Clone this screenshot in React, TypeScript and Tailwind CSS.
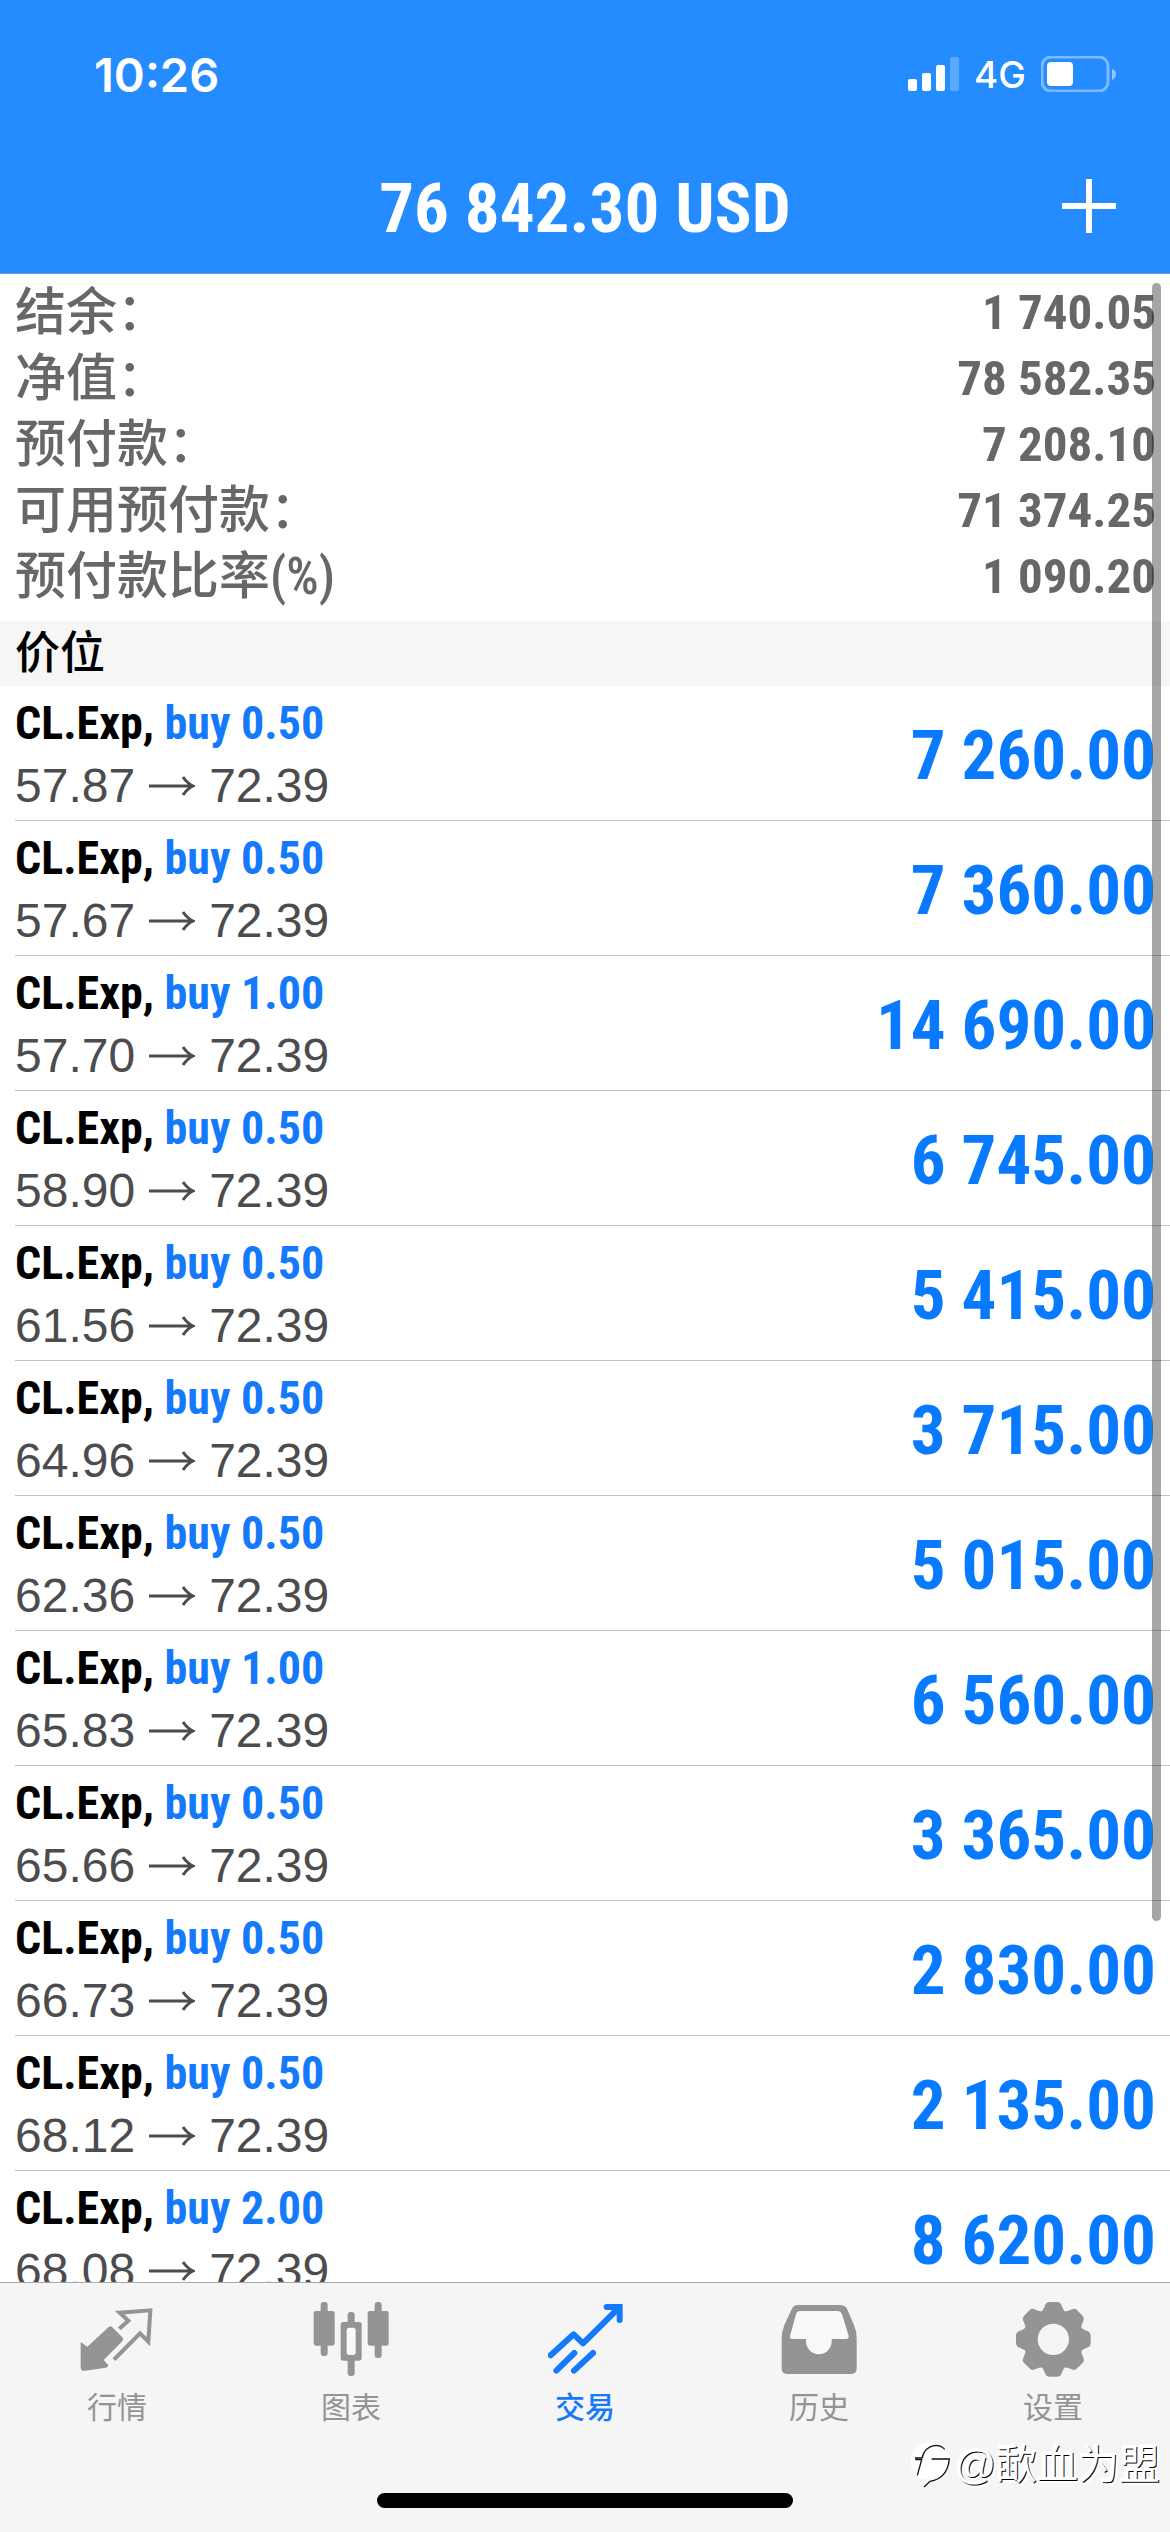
import type { ReactNode } from "react";
import clsx from "clsx";

const summary = [
  { label: "结余：", value: "1 740.05" },
  { label: "净值：", value: "78 582.35" },
  { label: "预付款：", value: "7 208.10" },
  { label: "可用预付款：", value: "71 374.25" },
  { label: "预付款比率(%)", value: "1 090.20" },
];

const positions = [
  { volume: "0.50", open: "57.87", profit: "7 260.00" },
  { volume: "0.50", open: "57.67", profit: "7 360.00" },
  { volume: "1.00", open: "57.70", profit: "14 690.00" },
  { volume: "0.50", open: "58.90", profit: "6 745.00" },
  { volume: "0.50", open: "61.56", profit: "5 415.00" },
  { volume: "0.50", open: "64.96", profit: "3 715.00" },
  { volume: "0.50", open: "62.36", profit: "5 015.00" },
  { volume: "1.00", open: "65.83", profit: "6 560.00" },
  { volume: "0.50", open: "65.66", profit: "3 365.00" },
  { volume: "0.50", open: "66.73", profit: "2 830.00" },
  { volume: "0.50", open: "68.12", profit: "2 135.00" },
  { volume: "2.00", open: "68.08", profit: "8 620.00" },
];

const currentPrice = "72.39";

const tabs: { label: string; icon: ReactNode; active?: boolean }[] = [
  { label: "行情", icon: <QuotesIcon /> },
  { label: "图表", icon: <ChartIcon /> },
  { label: "交易", icon: <TradeIcon />, active: true },
  { label: "历史", icon: <HistoryIcon /> },
  { label: "设置", icon: <SettingsIcon /> },
];

function QuotesIcon() {
  return (
    <svg viewBox="118 66 225 225" className="size-[75px]" aria-hidden="true">
      <path
        d="M236 146 263 122 237 98 329 91 323 185 298 160 220 239"
        fill="none"
        stroke="currentColor"
        strokeWidth="12"
      />
      <path
        d="M120 186 140 200 204 141Q209 136 214 141L245 172Q250 178 245 184L189 240 203 256Q203 262 196 263L132 272Q120 274 120 262Z"
        fill="currentColor"
      />
    </svg>
  );
}

function ChartIcon() {
  return (
    <svg viewBox="820 66 225 225" className="size-[75px] overflow-visible" fill="currentColor" aria-hidden="true">
      <rect x="840" y="66" width="21" height="162" rx="9" />
      <rect x="819" y="93" width="63" height="104" rx="7" />
      <rect x="921" y="96" width="21" height="192" rx="9" />
      <rect x="900" y="126" width="63" height="116" rx="7" />
      <rect x="918" y="143" width="27" height="82" rx="8" fill="#f9f9f9" />
      <rect x="1002" y="66" width="21" height="168" rx="9" />
      <rect x="981" y="93" width="63" height="104" rx="7" />
    </svg>
  );
}

function TradeIcon() {
  return (
    <svg
      viewBox="142 66 225 225"
      className="size-[75px]"
      fill="none"
      stroke="currentColor"
      strokeWidth="18"
      strokeLinecap="round"
      strokeLinejoin="round"
      aria-hidden="true"
    >
      <path d="M150 226 219 163 247 190 354 84" />
      <path d="M318 81H357V120" strokeLinejoin="miter" />
      <path d="M167 272 221 219M220 272 277 219" />
    </svg>
  );
}

function HistoryIcon() {
  return (
    <svg viewBox="844 66 225 225" className="size-[75px] overflow-visible" aria-hidden="true">
      <path
        fill="currentColor"
        d="M893 75H1018Q1033 75 1039 86L1060 135Q1068 155 1068 175V265Q1068 282 1052 282H859Q843 282 843 265V175Q843 155 851 135L873 88Q878 75 893 75Z"
      />
      <path
        fill="#f9f9f9"
        d="M898 93H1010Q1020 93 1024 103L1044 168Q1045 177 1036 177H993V184A38 38 0 0 1 916 184V177H875Q866 177 868 168L886 103Q889 93 898 93Z"
      />
    </svg>
  );
}

function SettingsIcon() {
  return (
    <svg viewBox="-112 -112 225 225" className="size-[75px]" fill="currentColor" aria-hidden="true">
      <circle r="69" fill="none" stroke="currentColor" strokeWidth="44" />
      {[0, 45, 90, 135, 180, 225, 270, 315].map((angle) => (
        <path
          key={angle}
          transform={`rotate(${angle})`}
          d="M-37-81Q-31-86-24-104-21-112-12-112H12Q21-112 24-104 31-86 37-81Z"
        />
      ))}
    </svg>
  );
}

function StatusBar() {
  return (
    <div className="flex h-[148px] items-center justify-between pl-[94px] pr-[54px]">
      <time className="font-[Inter,sans-serif] text-[47px] font-semibold leading-none">10:26</time>
      <div className="flex items-center gap-[15px]">
        <svg viewBox="0 0 51 34" className="h-[34px] w-[51px]" fill="currentColor" aria-hidden="true">
          <rect y="22" width="9" height="12" rx="2" />
          <rect x="14" y="16" width="9" height="18" rx="2" />
          <rect x="28" y="8" width="9" height="26" rx="2" />
          <rect x="42" width="9" height="34" rx="2" opacity=".25" />
        </svg>
        <span className="font-[Inter,sans-serif] text-[37px] font-medium leading-none">4G</span>
        <svg viewBox="0 0 75 36" className="h-[36px] w-[75px]" aria-hidden="true">
          <rect x="1" y="1" width="66" height="34" rx="9" fill="none" stroke="currentColor" strokeWidth="3" opacity=".4" />
          <rect x="6" y="6" width="26" height="24" rx="4" fill="currentColor" />
          <path d="M71 13Q75 14 75 18T71 24Z" fill="currentColor" opacity=".5" />
        </svg>
      </div>
    </div>
  );
}

function PositionRow({ volume, open, profit }: { volume: string; open: string; profit: string }) {
  return (
    <li className="ml-[15px] flex h-[135px] shrink-0 items-center justify-between border-b border-[#c2c2c4] pr-[14px]">
      <div className="pt-px">
        <p className="font-['Roboto_Condensed',sans-serif] text-[46px] font-bold leading-[64px] text-black">
          CL.Exp, <span className="text-[#1479fb]">buy {volume}</span>
        </p>
        <p className="flex items-center gap-[14px] text-[48px] leading-[62px] text-[#4c4c4e]">
          <span>{open}</span>
          <svg viewBox="0 0 46 20" className="h-5 w-[46px]" fill="none" stroke="currentColor" strokeWidth="3" aria-label="→">
            <path d="M0 10H44M34 1Q38 7 44 10 38 13 34 19" />
          </svg>
          <span>{currentPrice}</span>
        </p>
      </div>
      <p className="pt-1 font-['Roboto_Condensed',sans-serif] text-[69px] font-bold leading-none text-[#087aff]">
        {profit}
      </p>
    </li>
  );
}

function Watermark() {
  return (
    <div className="absolute bottom-[39px] right-[10px] flex items-center gap-1 text-white">
      <svg viewBox="32 50 120 138" className="h-[46px] w-10" aria-hidden="true">
        <path
          d="M75 52Q110 44 135 68 152 88 150 105 146 160 92 166L74 184 80 158Q62 166 54 152 34 140 34 108 36 66 75 52Z"
          fill="currentColor"
        />
        <path
          d="M54 150 67 103H50L49 98H68Q76 64 108 60 126 60 136 72M97 101H150Q144 160 92 168L74 185"
          fill="none"
          stroke="#111"
          strokeWidth="4"
        />
      </svg>
      <span className="text-[41px] leading-[56px] [text-shadow:1px_1px_0_#000,-1px_-1px_0_#fff,3px_3px_1px_#fff]">
        @歃血为盟
      </span>
    </div>
  );
}

export default function App() {
  return (
    <div className="flex h-screen flex-col bg-white font-['Liberation_Sans','Noto_Sans_CJK_SC',sans-serif]">
      <header className="shrink-0 border-b border-[#6f9fd8] bg-[#258cff] text-white">
        <StatusBar />
        <div className="grid h-[125px] grid-cols-[1fr_auto_1fr] items-start">
          <h1 className="col-start-2 pt-5 font-['Roboto_Condensed',sans-serif] text-[69px] font-bold leading-[82px]">
            76 842.30 USD
          </h1>
          <button type="button" aria-label="新订单" className="mr-[54px] mt-[31px] justify-self-end">
            <svg viewBox="0 0 54 54" className="size-[54px]" stroke="currentColor" strokeWidth="6" aria-hidden="true">
              <path d="M27 0V54M0 27H54" />
            </svg>
          </button>
        </div>
      </header>

      <main className="relative min-h-0 flex-1 overflow-hidden">
        <dl className="pb-3 pl-[15px] pr-[14px] pt-[5px] text-[#676767]">
          {summary.map((item) => (
            <div key={item.label} className="flex h-[66px] items-center justify-between">
              <dt className="font-['Roboto_Condensed','Noto_Sans_CJK_SC',sans-serif] text-[51px] font-medium leading-none">
                {item.label}
              </dt>
              <dd className="font-['Roboto_Condensed',sans-serif] text-[49px] font-bold leading-none">{item.value}</dd>
            </div>
          ))}
        </dl>

        <h2 className="flex h-[65px] items-center bg-[#f6f6f6] pl-[15px] font-['Roboto_Condensed','Noto_Sans_CJK_SC',sans-serif] text-[45px] font-medium leading-none text-black">
          价位
        </h2>
        <ul>
          {positions.map((position) => (
            <PositionRow key={position.open} {...position} />
          ))}
        </ul>

        <div className="absolute right-[9px] top-[9px] h-[1638px] w-[9px] rounded-full bg-black/35" />
      </main>

      <nav className="relative flex h-[250px] shrink-0 flex-col border-t border-[#a8a8aa] bg-[#f5f5f5]">
        <div className="grid grid-cols-5 pt-[19px]">
          {tabs.map((tab) => (
            <button
              key={tab.label}
              type="button"
              aria-current={tab.active ? "page" : undefined}
              className={clsx(
                "flex flex-col items-center gap-2 font-['Noto_Sans_CJK_SC',sans-serif] text-[30px] leading-[40px]",
                tab.active ? "font-medium text-[#1479fb]" : "text-[#949494]"
              )}
            >
              {tab.icon}
              {tab.label}
            </button>
          ))}
        </div>
        <div className="mx-auto mb-6 mt-auto h-[15px] w-[416px] rounded-full bg-black" />
        <Watermark />
      </nav>
    </div>
  );
}
